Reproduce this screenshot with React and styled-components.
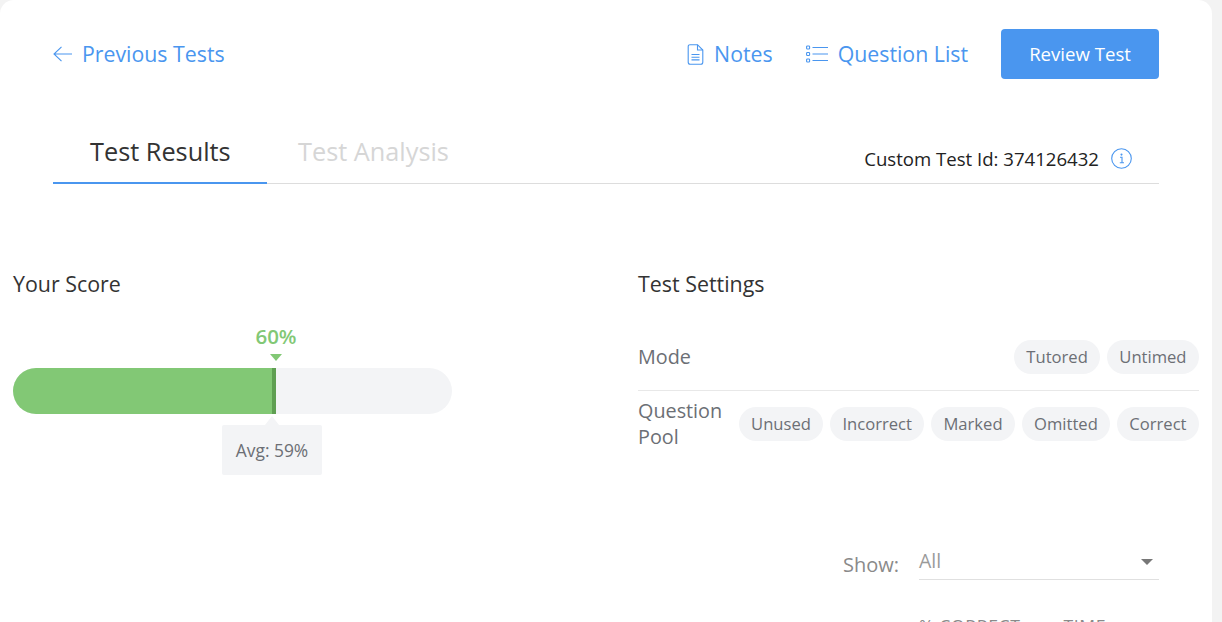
import React from 'react';
import styled, { createGlobalStyle } from 'styled-components';

const GlobalStyle = createGlobalStyle`
    html, body {
        margin: 0;
        height: 622px;
        overflow: hidden;
        background: #f3f3f3;
        font-family: "Open Sans", "Noto Sans", sans-serif;
    }
`;

const BLUE = '#4a96ef';

const ArrowLeft = () => (
    <svg width="19" height="16" viewBox="0 0 19 16" fill="none" stroke={BLUE} strokeWidth="1.1">
        <path d="M19 8H1M8.5 0.8L1 8l7.5 7.2" />
    </svg>
);

const NoteIcon = () => (
    <svg width="17" height="21" viewBox="0 0 16 21" fill="none" stroke={BLUE} strokeWidth="1.1">
        <path d="M2.5 0.7H10L15.3 6V18.3a2 2 0 0 1-2 2H2.7a2 2 0 0 1-2-2V2.5a1.8 1.8 0 0 1 1.8-1.8Z" />
        <path d="M10 0.7V6h5.3M4 10.5h8M4 13.2h8M4 15.9h8" />
    </svg>
);

const ListIcon = () => (
    <svg width="22" height="18" viewBox="0 0 22 18" fill="none" stroke={BLUE} strokeWidth="1.1">
        <rect x="0.6" y="1" width="3" height="3" rx="0.8" />
        <rect x="0.6" y="7.5" width="3" height="3" rx="0.8" />
        <rect x="0.6" y="14" width="3" height="3" rx="0.8" />
        <path d="M6.5 2.5H22M6.5 9H22M6.5 15.5H22" />
    </svg>
);

const InfoIcon = () => (
    <svg width="21" height="21" viewBox="0 0 21 21" fill="none" stroke={BLUE} strokeWidth="1.1">
        <circle cx="10.5" cy="10.5" r="9.8" />
        <path d="M9 9.2h2v5.6M8.8 14.8h4.2" />
        <circle cx="10.5" cy="6.6" r="0.5" fill={BLUE} />
    </svg>
);

const App = () => {
    return (
        <Page>
            <GlobalStyle />
            <Card>
                <Header>
                    <TextLink>
                        <ArrowLeft />
                        Previous Tests
                    </TextLink>
                    <Actions>
                        <TextLink>
                            <NoteIcon />
                            Notes
                        </TextLink>
                        <TextLink>
                            <ListIcon />
                            Question List
                        </TextLink>
                        <ReviewButton>Review Test</ReviewButton>
                    </Actions>
                </Header>

                <Tabs>
                    <Tab $active>Test Results</Tab>
                    <Tab>Test Analysis</Tab>
                    <TestId>
                        Custom Test Id: 374126432
                        <InfoIcon />
                    </TestId>
                </Tabs>

                <Columns>
                    <div>
                        <SectionTitle>Your Score</SectionTitle>
                        <ScoreLabel>60%</ScoreLabel>
                        <ScoreCaret />
                        <Bar>
                            <BarFill style={{ width: `${(263 / 439) * 100}%` }} />
                        </Bar>
                        <AvgBox>Avg: 59%</AvgBox>
                    </div>

                    <div>
                        <SectionTitle>Test Settings</SectionTitle>
                        <ModeRow>
                            <RowLabel>Mode</RowLabel>
                            <Chips>
                                <Chip>Tutored</Chip>
                                <Chip>Untimed</Chip>
                            </Chips>
                        </ModeRow>
                        <PoolRow>
                            <RowLabel>Question<br />Pool</RowLabel>
                            <Chips>
                                <Chip>Unused</Chip>
                                <Chip>Incorrect</Chip>
                                <Chip>Marked</Chip>
                                <Chip>Omitted</Chip>
                                <Chip>Correct</Chip>
                            </Chips>
                        </PoolRow>
                    </div>
                </Columns>

                <ShowRow>
                    <ShowLabel>Show:</ShowLabel>
                    <ShowSelect>
                        All
                        <SelectCaret />
                    </ShowSelect>
                </ShowRow>

                <TableHead>
                    <span>% CORRECT</span>
                    <span>TIME</span>
                </TableHead>
            </Card>
        </Page>
    );
}

const Page = styled.div`
    height: 622px;
    overflow: hidden;
`;

const Card = styled.div`
    width: 1212px;
    height: 700px;
    box-sizing: border-box;
    background: #fff;
    border-radius: 14px 14px 0 0;
    padding: 29px 13px 0;
`;

const Header = styled.div`
    height: 50px;
    margin: 0 40px;
    display: flex;
    justify-content: space-between;
    align-items: center;
`;

const Actions = styled.div`
    display: flex;
    align-items: center;
`;

const TextLink = styled.a`
    display: flex;
    align-items: center;
    gap: 10px;
    margin-right: 33px;
    color: ${BLUE};
    font-size: 21.3px;
    line-height: 28px;
`;

const ReviewButton = styled.button`
    width: 158px;
    height: 50px;
    padding: 0 0 2px;
    border: 0;
    border-radius: 4px;
    background: ${BLUE};
    color: #fff;
    font-family: inherit;
    font-size: 18.6px;
`;

const Tabs = styled.div`
    height: 57px;
    margin: 48px 40px 0;
    box-sizing: border-box;
    display: flex;
    border-bottom: 1px solid #ddd;
`;

const Tab = styled.div`
    height: 57px;
    box-sizing: border-box;
    padding-top: 6px;
    font-size: 25.3px;
    line-height: 36px;
    color: ${(p) => (p.$active ? '#333' : '#d6d6d6')};
    width: ${(p) => (p.$active ? '214px' : 'auto')};
    padding-left: ${(p) => (p.$active ? '37px' : '31px')};
    ${(p) => p.$active && `border-bottom: 2px solid ${BLUE};`}
`;

const TestId = styled.div`
    margin-left: auto;
    display: flex;
    align-items: center;
    gap: 12px;
    height: 56px;
    padding: 6px 27px 0 0;
    box-sizing: border-box;
    font-size: 18.6px;
    color: #222;
`;

const Columns = styled.div`
    display: grid;
    grid-template-columns: 439px 561px;
    column-gap: 186px;
    margin-top: 83px;
`;

const SectionTitle = styled.div`
    font-size: 21.4px;
    line-height: 34px;
    color: #333;
`;

const ScoreLabel = styled.div`
    width: 60px;
    margin: 23px 0 0 233px;
    text-align: center;
    font-size: 20.5px;
    font-weight: 600;
    line-height: 25px;
    color: #82c875;
`;

const ScoreCaret = styled.div`
    width: 0;
    margin: 5px 0 0 257px;
    border-left: 6.5px solid transparent;
    border-right: 6.5px solid transparent;
    border-top: 7px solid #82c875;
`;

const Bar = styled.div`
    height: 46px;
    margin-top: 7px;
    border-radius: 23px;
    background: #f3f4f6;
    overflow: hidden;
`;

const BarFill = styled.div`
    height: 100%;
    box-sizing: border-box;
    background: #82c875;
    border-right: 4px solid #5f9f52;
`;

const AvgBox = styled.div`
    position: relative;
    width: 100px;
    height: 50px;
    margin: 11px 0 0 209px;
    border-radius: 2px;
    background: #f3f4f6;
    text-align: center;
    font-size: 17.4px;
    line-height: 50px;
    color: #6c6f75;
    &::before {
        content: '';
        position: absolute;
        top: -9px;
        left: 43px;
        border-left: 7px solid transparent;
        border-right: 7px solid transparent;
        border-bottom: 9px solid #f3f4f6;
    }
`;

const ModeRow = styled.div`
    height: 70px;
    margin-top: 20px;
    padding-top: 2px;
    box-sizing: border-box;
    display: flex;
    justify-content: space-between;
    align-items: center;
    border-bottom: 1px solid #e8e8e8;
`;

const PoolRow = styled.div`
    display: flex;
    justify-content: space-between;
    align-items: center;
    margin-top: 7px;
`;

const RowLabel = styled.div`
    font-size: 19.8px;
    line-height: 26px;
    color: #6c6f75;
`;

const Chips = styled.div`
    display: flex;
    gap: 6.5px;
`;

const Chip = styled.span`
    height: 34px;
    padding: 0 12.5px;
    border-radius: 17px;
    background: #f3f4f6;
    font-size: 16.6px;
    line-height: 34px;
    color: #6c6f75;
`;

const ShowRow = styled.div`
    display: flex;
    justify-content: flex-end;
    margin: 73px 40px 0;
`;

const ShowLabel = styled.div`
    margin: 4px 20px 0 0;
    font-size: 20px;
    line-height: 26px;
    color: #8a8a8a;
`;

const ShowSelect = styled.div`
    position: relative;
    width: 240px;
    height: 32px;
    box-sizing: border-box;
    border-bottom: 1px solid #e0e0e0;
    font-size: 19.5px;
    line-height: 26px;
    color: #9a9a9a;
`;

const SelectCaret = styled.span`
    position: absolute;
    top: 11px;
    right: 6px;
    border-left: 6px solid transparent;
    border-right: 6px solid transparent;
    border-top: 6px solid #777;
`;

const TableHead = styled.div`
    display: flex;
    gap: 43px;
    margin: 34px 0 0 906px;
    font-size: 17.6px;
    letter-spacing: 0.6px;
    color: #8a8a8a;
`;

export default App;
